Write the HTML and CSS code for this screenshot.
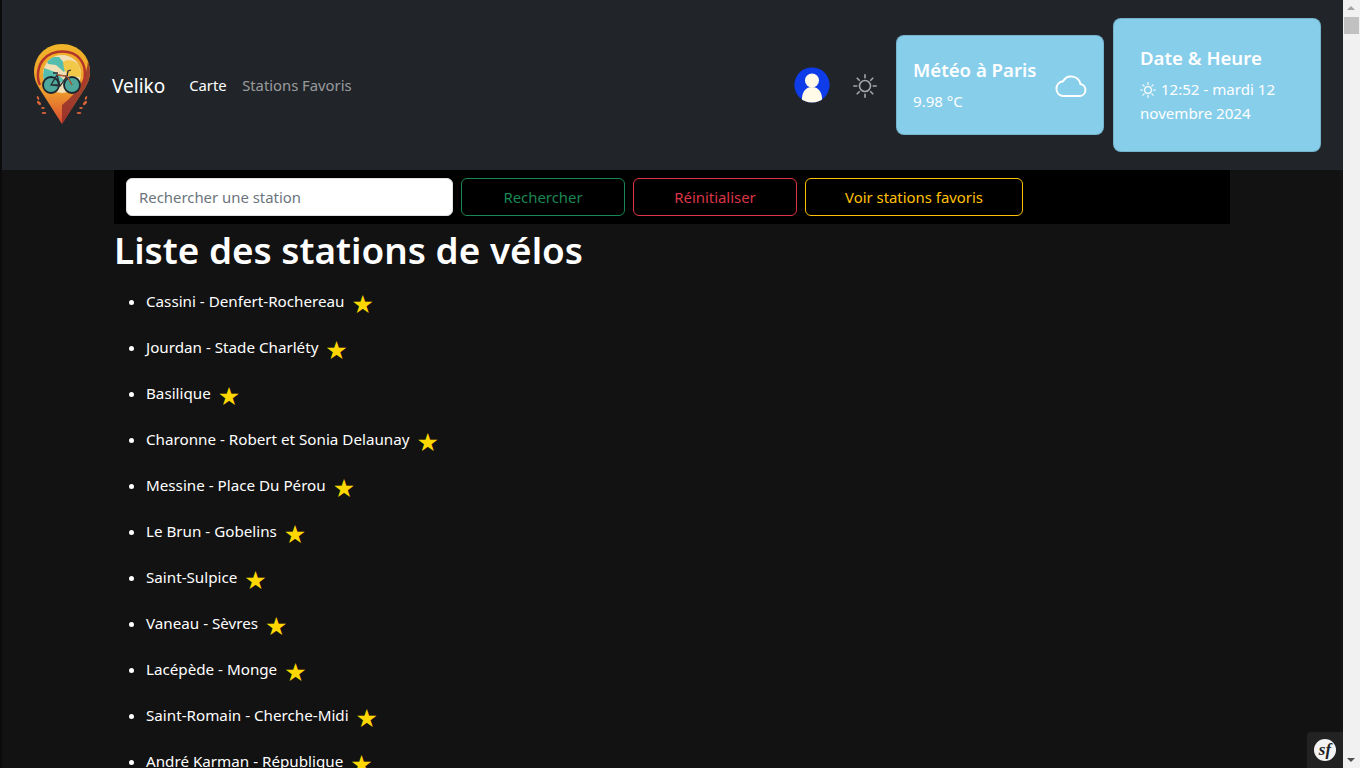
FILE: index.html

```html
<!DOCTYPE html>
<html lang="fr">
<head>
    <meta charset="UTF-8">
    <meta name="viewport" content="width=device-width, initial-scale=1.0">
    <title>Veliko</title>
    <link rel="stylesheet" href="styles.css">
</head>
<body>
    <nav class="navbar">
        <svg class="logo" viewBox="0 0 60 84" width="60" height="84" aria-label="Veliko">
            <defs>
                <linearGradient id="pin" x1="0" y1="0" x2="0" y2="1">
                    <stop offset="0" stop-color="#f0b52a"/>
                    <stop offset="0.6" stop-color="#ee9a2c"/>
                    <stop offset="1" stop-color="#d84a32"/>
                </linearGradient>
                <clipPath id="disc"><circle cx="30" cy="31" r="19"/></clipPath>
            </defs>
            <path d="M30 1C14 1 2 13 2 29c0 6 2 11 5 16l23 36 23-36c3-5 5-10 5-16C58 13 46 1 30 1z" fill="url(#pin)"/>
            <path d="M30 81l23-36c3-5 5-10 5-16 0-4-1-8-2-11-1 14-8 30-26 44z" fill="#8d2a2c" opacity="0.8"/>
            <path d="M8 42C4 34 6 22 12 16 21 6 40 6 48 16c6 7 6 18 3 26" fill="none" stroke="#b3342a" stroke-width="2.500"/>
            <circle cx="30" cy="31" r="19" fill="#f1dfb6"/>
            <g clip-path="url(#disc)">
                <path d="M13 14h14l6 7 4-1-5 9-8-7-8-1z" fill="#55bdae"/>
                <path d="M31 19c5-4 12-2 16 4l3 11-14-1-4-7z" fill="#f2c849"/>
                <path d="M12 25l11 4 9 8-5 4H10z" fill="#55bdae"/>
            </g>
            <g fill="#4fa89c" stroke="#1c2630" stroke-width="1.800">
                <circle cx="19" cy="42" r="8"/>
                <circle cx="40" cy="42" r="8"/>
            </g>
            <path d="M19 42l6-10 10 1-7 10zM35 33l5 9M25 32l3 11M19 42h9M21 30h5M35 33l1-5 3-1" fill="none" stroke="#2a2d33" stroke-width="1.300"/>
            <path d="M25 32l10 1M35 33l5 9" fill="none" stroke="#d8622f" stroke-width="1"/>
            <g fill="#d8643a">
                <ellipse cx="6" cy="55" rx="1" ry="2" transform="rotate(-25 6 55)"/>
                <ellipse cx="7" cy="60" rx="1.300" ry="2.600" transform="rotate(-45 7 60)"/>
                <ellipse cx="11" cy="65" rx="1.800" ry="1"/>
                <ellipse cx="12" cy="70" rx="2.400" ry="1.100"/>
                <ellipse cx="54" cy="55" rx="1" ry="2" transform="rotate(25 54 55)"/>
                <ellipse cx="53" cy="60" rx="1.300" ry="2.600" transform="rotate(45 53 60)"/>
                <ellipse cx="49" cy="65" rx="1.800" ry="1"/>
                <ellipse cx="47" cy="70" rx="2.400" ry="1.100"/>
            </g>
        </svg>
        <a class="brand" href="#">Veliko</a>
        <ul class="nav-links">
            <li><a class="nav-link active" href="#">Carte</a></li>
            <li><a class="nav-link" href="#">Stations Favoris</a></li>
        </ul>
        <div class="nav-right">
            <svg class="avatar" viewBox="0 0 36 36" width="36" height="36">
                <defs><clipPath id="round"><circle cx="18" cy="18" r="17.600"/></clipPath></defs>
                <circle cx="18" cy="18" r="17.600" fill="#0d3ce8"/>
                <g clip-path="url(#round)" fill="#fffbe8">
                    <circle cx="18" cy="13.500" r="7"/>
                    <path d="M8 36c-1-10 3-16 10-16s11 6 10 16z"/>
                </g>
            </svg>
            <svg class="theme-icon" viewBox="0 0 24 24" width="24" height="24" fill="none" stroke="#a5a7a9" stroke-width="1.600" stroke-linecap="round">
                <circle cx="12" cy="12" r="5.500"/>
                <path d="M12 .8v3M12 20.200v3M.8 12h3M20.200 12h3M4.200 4.200l2.100 2.100M17.700 17.700l2.100 2.100M4.200 19.800l2.100-2.100M17.700 6.300l2.100-2.100"/>
            </svg>
            <div class="card card-weather">
                <div class="card-text">
                    <h5>Météo à Paris</h5>
                    <p>9.98 °C</p>
                </div>
                <svg class="cloud" viewBox="0 0 32 24" width="33" height="24" fill="none" stroke="#fff" stroke-width="2">
                    <path d="M8 23h17a6 6 0 0 0 1-11.900A9.500 9.500 0 0 0 8.500 8.200 7.500 7.500 0 0 0 8 23z"/>
                </svg>
            </div>
            <div class="card card-date">
                <h5>Date &amp; Heure</h5>
                <p>
                    <svg class="small-sun" viewBox="0 0 24 24" width="16" height="16" fill="none" stroke="#fff" stroke-width="1.800" stroke-linecap="round">
                        <circle cx="12" cy="12" r="5"/>
                        <path d="M12 1v3M12 20v3M1 12h3M20 12h3M4.200 4.200l2.100 2.100M17.700 17.700l2.100 2.100M4.200 19.800l2.100-2.100M17.700 6.300l2.100-2.100"/>
                    </svg>
                    12:52 - mardi 12 novembre 2024
                </p>
            </div>
        </div>
    </nav>

    <main class="container">
        <form class="search-bar">
            <input class="search-input" type="text" placeholder="Rechercher une station">
            <button class="btn btn-success" type="button">Rechercher</button>
            <button class="btn btn-danger" type="button">Réinitialiser</button>
            <button class="btn btn-warning" type="button">Voir stations favoris</button>
        </form>
        <h1>Liste des stations de vélos</h1>
        <ul class="stations">
            <li>Cassini - Denfert-Rochereau <span class="star">★</span></li>
            <li>Jourdan - Stade Charléty <span class="star">★</span></li>
            <li>Basilique <span class="star">★</span></li>
            <li>Charonne - Robert et Sonia Delaunay <span class="star">★</span></li>
            <li>Messine - Place Du Pérou <span class="star">★</span></li>
            <li>Le Brun - Gobelins <span class="star">★</span></li>
            <li>Saint-Sulpice <span class="star">★</span></li>
            <li>Vaneau - Sèvres <span class="star">★</span></li>
            <li>Lacépède - Monge <span class="star">★</span></li>
            <li>Saint-Romain - Cherche-Midi <span class="star">★</span></li>
            <li>André Karman - République <span class="star">★</span></li>
        </ul>
    </main>

    <div class="scrollbar">
        <span class="arrow arrow-up"></span>
        <span class="thumb"></span>
        <span class="arrow arrow-down"></span>
    </div>
    <div class="sf-toolbar"><span class="sf-logo">sf</span></div>
</body>
</html>
```

FILE: styles.css

```css
/* General */
* {
    box-sizing: border-box;
}

html {
    height: 100%;
    overflow: hidden;
}

body {
    margin: 0 17px 0 0;
    height: 100%;
    overflow: hidden;
    background-color: #121212;
    border-left: 2px solid #0b0b0b;
    color: #fff;
    font-family: 'Noto Sans', sans-serif;
    font-size: 15.2px;
    line-height: 24px;
}

/* Navbar */
.navbar {
    display: flex;
    align-items: center;
    height: 170px;
    padding: 0 22px 0 30px;
    background-color: #212529;
}

.logo {
    flex: none;
    margin-right: 20px;
}

.brand {
    color: #fff;
    font-size: 19px;
    text-decoration: none;
    margin-right: 24px;
    padding-top: 2px;
}

.nav-links {
    display: flex;
    gap: 15.500px;
    list-style: none;
    margin: 0;
    padding: 0;
    font-size: 14.800px;
}

.nav-link {
    color: rgba(255, 255, 255, 0.55);
    text-decoration: none;
}

.nav-link.active {
    color: #fff;
}

.nav-right {
    display: flex;
    align-items: center;
    margin-left: auto;
}

.avatar {
    margin-right: 23px;
}

.theme-icon {
    margin-top: 2px;
    margin-right: 19px;
}

/* Info cards */
.card {
    width: 208px;
    padding: 0 16px;
    background-color: #87ceeb;
    border: 1px solid rgba(0, 0, 0, 0.125);
    border-radius: 8px;
    color: #fff;
    font-size: 15.100px;
}

.card h5 {
    margin: 0 0 7px;
    font-size: 18.600px;
    font-weight: 600;
    line-height: 24px;
}

.card p {
    margin: 0;
}

.card-weather {
    display: flex;
    align-items: center;
    justify-content: space-between;
    height: 100px;
}

.card-text {
    padding-top: 1px;
}

.card-date {
    height: 134px;
    margin-left: 9px;
    padding: 27px 26px;
}

.small-sun {
    vertical-align: -3px;
    margin-right: 1px;
}

/* Page content */
.container {
    width: 1116px;
    margin-left: 112px;
}

.search-bar {
    display: flex;
    gap: 8px;
    padding: 8px 12px;
    background-color: #000;
}

.search-input {
    width: 327px;
    height: 38px;
    padding: 6px 12px;
    border: 1px solid #dee2e6;
    border-radius: 6px;
    background-color: #fff;
    font: inherit;
    font-size: 14.900px;
}

.search-input::placeholder {
    color: #6c757d;
}

.btn {
    width: 164px;
    height: 38px;
    background: transparent;
    border: 1px solid;
    border-radius: 6px;
    font: inherit;
    font-size: 14.900px;
}

.btn-success {
    color: #198754;
    border-color: #198754;
}

.btn-danger {
    color: #dc3545;
    border-color: #dc3545;
}

.btn-warning {
    width: 218px;
    color: #ffc107;
    border-color: #ffc107;
}

h1 {
    margin: 0 0 8px;
    font-size: 36.900px;
    font-weight: 600;
    line-height: 52px;
}

.stations {
    margin: 0;
    padding: 5px 0 0 32px;
}

.stations li {
    height: 46px;
}

.star {
    margin-left: 3px;
    color: #ffd700;
    font-family: 'DejaVu Sans', sans-serif;
    font-size: 25px;
    line-height: 24px;
    vertical-align: -6px;
}

/* Window scrollbar */
.scrollbar {
    position: fixed;
    top: 0;
    right: 0;
    bottom: 0;
    width: 17px;
    background-color: #f1f1f1;
}

.thumb {
    position: absolute;
    top: 17px;
    left: 1px;
    width: 15px;
    height: 17px;
    background-color: #c1c1c1;
}

.arrow {
    position: absolute;
    left: 4px;
    width: 0;
    height: 0;
    border-left: 4px solid transparent;
    border-right: 4px solid transparent;
}

.arrow-up {
    top: 6px;
    border-bottom: 4px solid #a3a3a3;
}

.arrow-down {
    bottom: 6px;
    border-top: 4px solid #505050;
}

/* Symfony toolbar button */
.sf-toolbar {
    position: fixed;
    right: 17px;
    bottom: 0;
    display: flex;
    align-items: center;
    justify-content: center;
    width: 36px;
    height: 36px;
    background-color: #222;
    border-top-left-radius: 4px;
}

.sf-logo {
    width: 22px;
    height: 22px;
    border-radius: 50%;
    background-color: #f3f3f3;
    color: #222;
    font-family: 'Liberation Serif', serif;
    font-size: 17px;
    font-style: italic;
    font-weight: bold;
    line-height: 21px;
    text-align: center;
}
```
